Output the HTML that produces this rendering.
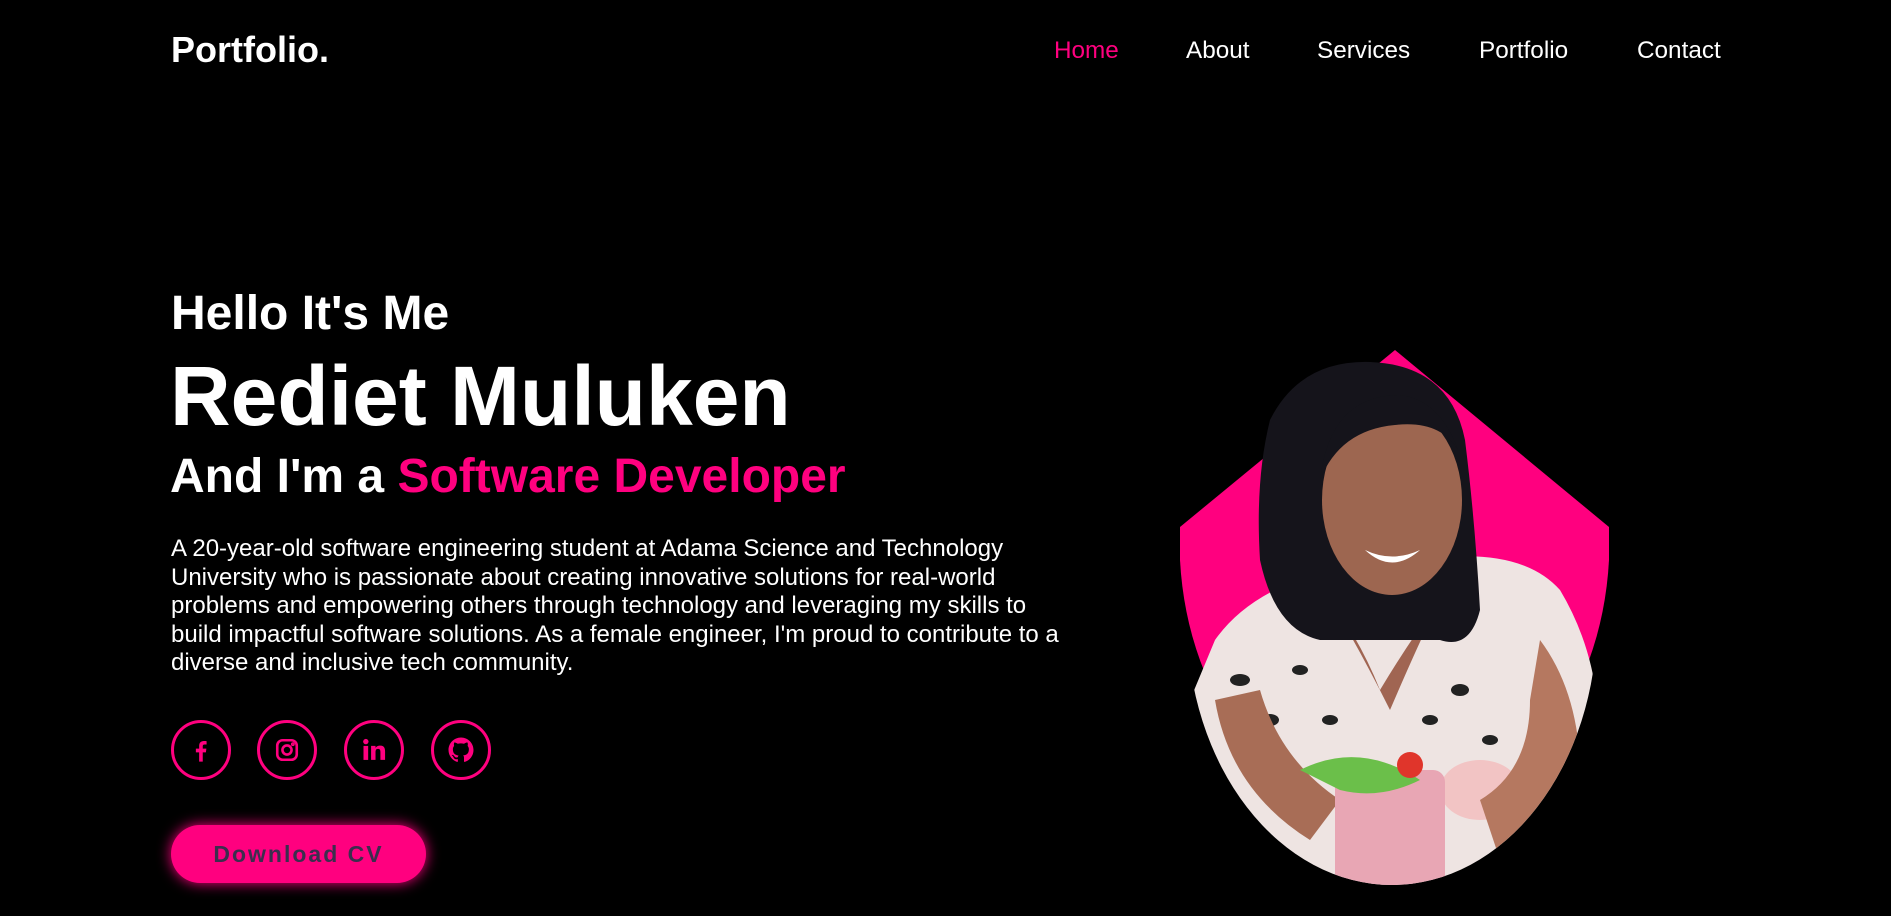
<!DOCTYPE html>
<html><head><meta charset="utf-8"><style>
*{margin:0;padding:0;box-sizing:border-box}
body{width:1891px;height:916px;background:#000;color:#fff;font-family:"Liberation Sans",Arial,sans-serif;position:relative;overflow:hidden}
.abs{position:absolute;white-space:nowrap}
.logo{left:171px;top:29px;font-size:36px;font-weight:bold}
.nav{top:37px;font-size:24.3px}
.h1{left:171px;top:286px;font-size:48px;font-weight:bold}
.h2{left:170px;top:348px;font-size:84px;font-weight:bold}
.h3{left:170px;top:449px;font-size:48px;font-weight:bold}
.pink{color:#ff007f}
.p{left:171px;top:535px;width:895px;font-size:24px;line-height:28.5px;white-space:normal}
.ic{top:720px;width:60px;height:60px;border:3px solid #ff007f;border-radius:50%;display:flex;align-items:center;justify-content:center}
.btn{left:171px;top:825px;width:255px;height:58px;border-radius:29px;background:#ff007f;box-shadow:0 0 14px #ff007f;color:#3b2e4e;font-size:23px;font-weight:bold;letter-spacing:2px;display:flex;align-items:center;justify-content:center}
</style></head><body>
<div class="abs logo">Portfolio.</div>
<div class="abs nav pink" style="left:1054px">Home</div>
<div class="abs nav" style="left:1186px">About</div>
<div class="abs nav" style="left:1317px">Services</div>
<div class="abs nav" style="left:1479px">Portfolio</div>
<div class="abs nav" style="left:1637px">Contact</div>

<div class="abs h1">Hello It's Me</div>
<div class="abs h2">Rediet Muluken</div>
<div class="abs h3">And I'm a <span class="pink">Software Developer</span></div>
<div class="abs p">A 20-year-old software engineering student at Adama Science and Technology University who is passionate about creating innovative solutions for real-world problems and empowering others through technology and leveraging my skills to build impactful software solutions. As a female engineer, I'm proud to contribute to a diverse and inclusive tech community.</div>

<div class="abs ic" style="left:171px"><svg width="28" height="28" viewBox="0 0 24 24"><path fill="#ff007f" d="M13.5 22v-8h2.7l.4-3.2h-3.1V8.8c0-.9.3-1.5 1.6-1.5h1.7V4.4c-.3 0-1.3-.1-2.4-.1-2.4 0-4 1.5-4 4.1v2.4H7.6V14h2.8v8z"/></svg></div>
<div class="abs ic" style="left:257px"><svg width="26" height="26" viewBox="0 0 24 24" fill="none" stroke="#ff007f" stroke-width="2.4"><rect x="3" y="3" width="18" height="18" rx="5"/><circle cx="12" cy="12" r="4.2"/><circle cx="17.4" cy="6.6" r=".6" fill="#ff007f"/></svg></div>
<div class="abs ic" style="left:344px"><svg width="28" height="28" viewBox="0 0 24 24" fill="#ff007f"><rect x="3" y="8.5" width="4" height="12"/><circle cx="5" cy="4.8" r="2.3"/><path d="M9.5 8.5h3.8v1.7c.6-1.1 2-2 4-2 3.5 0 4.2 2.3 4.2 5.3v7h-4v-6.2c0-1.5 0-3.3-2-3.3s-2.2 1.5-2.2 3.2v6.3h-3.8z"/></svg></div>
<div class="abs ic" style="left:431px"><svg width="30" height="30" viewBox="0 0 24 24" fill="#ff007f"><path d="M12 2C6.5 2 2 6.5 2 12c0 4.4 2.9 8.2 6.8 9.5.5.1.7-.2.7-.5v-1.7c-2.8.6-3.4-1.3-3.4-1.3-.5-1.2-1.1-1.5-1.1-1.5-.9-.6.1-.6.1-.6 1 .1 1.5 1 1.5 1 .9 1.5 2.3 1.1 2.9.8.1-.6.3-1.1.6-1.3-2.2-.3-4.6-1.1-4.6-5 0-1.1.4-2 1-2.7-.1-.3-.4-1.3.1-2.7 0 0 .8-.3 2.8 1a9.5 9.5 0 0 1 5 0c1.9-1.3 2.8-1 2.8-1 .5 1.4.2 2.4.1 2.7.6.7 1 1.6 1 2.7 0 3.9-2.3 4.7-4.6 4.9.4.3.7.9.7 1.9V21c0 .3.2.6.7.5A10 10 0 0 0 22 12c0-5.5-4.5-10-10-10z"/></svg></div>

<div class="abs btn">Download CV</div>

<svg class="abs" style="left:0;top:0" width="1891" height="916">
<defs><clipPath id="c"><ellipse cx="1392" cy="620" rx="205" ry="265"/></clipPath></defs>
<path d="M1180 527 L1395 350 L1609 527 L1609 560 A215 280 0 0 1 1180 560 Z" fill="#ff007f"/>
<g clip-path="url(#c)">
<path d="M1215 640 Q1250 590 1330 570 L1420 560 Q1520 545 1560 590 Q1590 640 1597 700 L1597 885 L1190 885 L1190 700 Z" fill="#eee4e2"/>
<g fill="#222">
<ellipse cx="1240" cy="680" rx="10" ry="6"/><ellipse cx="1270" cy="720" rx="9" ry="6"/><ellipse cx="1300" cy="670" rx="8" ry="5"/><ellipse cx="1250" cy="760" rx="8" ry="5"/><ellipse cx="1460" cy="690" rx="9" ry="6"/><ellipse cx="1490" cy="740" rx="8" ry="5"/><ellipse cx="1430" cy="720" rx="8" ry="5"/><ellipse cx="1330" cy="720" rx="8" ry="5"/></g>
<ellipse cx="1480" cy="790" rx="40" ry="30" fill="#f2c4c4"/>
<path d="M1540 640 Q1585 700 1580 800 Q1560 850 1500 860 L1480 800 Q1530 770 1530 700 Z" fill="#b57860"/>
<path d="M1215 700 Q1230 790 1310 840 L1340 800 Q1280 760 1260 690 Z" fill="#a86d56"/>
<path d="M1330 600 Q1360 640 1380 690 Q1410 640 1440 600 Q1420 640 1390 710 Q1360 650 1330 600Z" fill="#a06552"/>
<rect x="1335" y="770" width="110" height="130" rx="12" fill="#e8a6b4"/>
<path d="M1300 770 Q1360 740 1420 780 Q1380 800 1340 790Z" fill="#6bbf4a"/>
<circle cx="1410" cy="765" r="13" fill="#e0352b"/>
</g>
<path d="M1270 420 Q1300 360 1370 362 Q1450 365 1465 440 Q1475 520 1480 610 Q1470 650 1440 640 L1320 640 Q1275 630 1260 560 Q1255 480 1270 420Z" fill="#15141b"/>
<ellipse cx="1392" cy="500" rx="70" ry="95" fill="#9d6650"/>
<path d="M1320 480 Q1330 395 1400 395 Q1440 400 1458 450 Q1440 420 1395 425 Q1340 430 1320 480Z" fill="#15141b"/>
<path d="M1365 550 Q1392 575 1420 550 Q1392 563 1365 550Z" fill="#fff"/>
</svg>
</body></html>
